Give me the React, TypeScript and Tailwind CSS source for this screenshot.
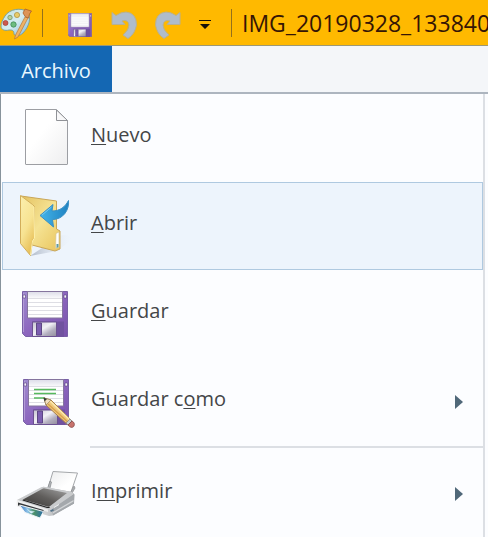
import type { ReactNode } from "react";

type MenuItem = {
  before: string;
  accessKey: string;
  after: string;
  icon: ReactNode;
  active?: boolean;
  submenu?: boolean;
};

function Palette() {
  return (
    <svg viewBox="0 0 34 34" className="h-[34px] w-[34px] shrink-0" aria-hidden="true">
      <defs>
        <linearGradient id="palette" x1="0" y1="0" x2="1" y2="1">
          <stop offset="0" stopColor="#c3e0dc" />
          <stop offset="0.5" stopColor="#d5edf1" />
          <stop offset="1" stopColor="#7fb4d8" />
        </linearGradient>
      </defs>
      <path
        d="M5 10C9 3 22 1 27 6c5 5 2 15-4 21-3 3-8 4-9 1 0-4-2-4-5-4-4 1-8 0-8-4 0-3 2-7 4-10Z"
        fill="url(#palette)"
        stroke="#7fa398"
      />
      <circle cx="10" cy="11.500" r="2.2" fill="#b9cf9c" stroke="#648f62" strokeWidth="0.7" />
      <circle cx="17" cy="9" r="2.6" fill="#e8cc68" stroke="#aa8c3e" strokeWidth="0.7" />
      <circle cx="5.500" cy="17" r="2.5" fill="#cd594d" stroke="#a63d35" strokeWidth="0.7" />
      <circle cx="13.500" cy="18.500" r="2.700" fill="#6dbd80" stroke="#37834f" strokeWidth="0.7" />
      <path d="M25 11 28 12 18 31l-3.500 2 1-4Z" fill="#eeb265" stroke="#b87838" strokeWidth="0.7" />
      <path d="m23 7 2-4 3 1 3.500 1-2 3-1 4-3-1Z" fill="#dd9458" stroke="#ad6028" strokeWidth="0.8" />
    </svg>
  );
}

function Floppy({ className, pencil }: { className: string; pencil?: boolean }) {
  return (
    <>
      <defs>
        <linearGradient id="case" x1="0" y1="0" x2="1" y2="1">
          <stop offset="0" stopColor="#a08cd0" />
          <stop offset="0.5" stopColor="#8c66be" />
          <stop offset="1" stopColor="#7852aa" />
        </linearGradient>
        <linearGradient id="shutter" x1="0" y1="0" x2="1" y2="1">
          <stop offset="0" stopColor="#c4c2cf" />
          <stop offset="0.45" stopColor="#f2f1f6" />
          <stop offset="0.7" stopColor="#b3afbf" />
          <stop offset="1" stopColor="#918c9c" />
        </linearGradient>
        <linearGradient id="label" x1="0" y1="0" x2="0" y2="1">
          <stop offset="0" stopColor="#dcdce8" />
          <stop offset="0.3" stopColor="#fff" />
        </linearGradient>
      </defs>
      <g className={className}>
        <path d="M0.500 0.500h45v45H3.500l-3-3Z" fill="url(#case)" stroke="#7860a6" />
        <path d="M1.500 2v39" stroke="#b39bd6" />
        <path d="M1 4h2.500v3H1ZM42 4h2.500v3H42Z" fill="#f4effa" stroke="#57407f" strokeWidth="0.600" />
        <path d="M5.500 0.500h35V27h-35Z" fill="url(#label)" stroke="#85759e" />
        <path d="M6 7.500h34M6 11.500h34M6 15.500h34M6 19.500h34M6 23.500h34" stroke="#dedee4" />
        <path d="M10 30.500h32V46H10Z" fill="#70529f" />
        <path d="M10.500 31h24v14.500h-24Z" fill="url(#shutter)" stroke="#6b5190" />
        <path d="M14.500 32h5v12h-5Z" fill="#7c5db0" stroke="#5d4684" />
      </g>
      {pencil && (
        <g>
          <path d="M20 19.500h22M20 23.500h22M20 28h11" stroke="#57b95d" strokeWidth="1.500" />
          <path d="m30 28 2 7 22 20 4-4-21-21Z" fill="#efc87a" stroke="#a98048" />
          <path d="m34 34 22 20" stroke="#d7a04e" strokeWidth="1.500" />
          <path d="m36 31 21 20" stroke="#fbe9b0" strokeWidth="1.500" />
          <path d="m30 28 2 7 5-5Z" fill="#f3dfbd" stroke="#8c7756" strokeWidth="0.600" />
          <path d="m29.500 27.500 1 4 2.500-2.500Z" fill="#343b38" />
          <path d="m52 53 4-4 2 2-4 4Z" fill="#c5cbd2" stroke="#777" strokeWidth="0.600" />
          <path d="m54 55 4-4c2 1 3 3 2 5s-4 2-6-1Z" fill="#c7736d" stroke="#7b3d3d" strokeWidth="0.700" />
        </g>
      )}
    </>
  );
}

function ItemIcon({ children }: { children: ReactNode }) {
  return (
    <svg viewBox="0 0 64 64" className="h-16 w-16 shrink-0" aria-hidden="true">
      {children}
    </svg>
  );
}

const newIcon = (
  <ItemIcon>
    <defs>
      <linearGradient id="sheet" x1="0" y1="0" x2="1" y2="1">
        <stop offset="0.4" stopColor="#fff" />
        <stop offset="1" stopColor="#eeeeef" />
      </linearGradient>
    </defs>
    <path d="M12 3.500h30.500l11 11V58q0 .5-.5.5H12q-.5 0-.5-.5V4q0-.5.5-.5Z" fill="url(#sheet)" stroke="#9c9ea3" />
    <path d="M43 5v10h9Z" fill="#dcdddf" />
    <path d="M42.500 4v10.500h11Z" fill="#f8f8f9" stroke="#909297" strokeLinejoin="round" />
  </ItemIcon>
);

const openIcon = (
  <ItemIcon>
    <defs>
      <linearGradient id="inside" x1="0" y1="0" x2="1" y2="1">
        <stop offset="0" stopColor="#e4c261" />
        <stop offset="0.5" stopColor="#f5e394" />
        <stop offset="1" stopColor="#e9c45c" />
      </linearGradient>
      <linearGradient id="cover" x1="0" y1="0" x2="0.500" y2="1">
        <stop offset="0" stopColor="#fbefae" />
        <stop offset="0.6" stopColor="#f7e392" />
        <stop offset="1" stopColor="#e9c25c" />
      </linearGradient>
      <linearGradient id="arrow" x1="0" y1="0" x2="1" y2="0">
        <stop offset="0" stopColor="#43b4e8" />
        <stop offset="1" stopColor="#1f82c2" />
      </linearGradient>
      <linearGradient id="shade" x1="0" y1="0" x2="1" y2="0">
        <stop offset="0" stopColor="#8d99ac" />
        <stop offset="1" stopColor="#edf3fb" stopOpacity="0" />
      </linearGradient>
    </defs>
    <path d="M44 42q13-3 15 3L43 57 16 62l12-8Z" fill="url(#shade)" opacity="0.650" />
    <path d="m7 2 35.500 5v28l3.500 2v18l-5 2-23-6Z" fill="url(#inside)" stroke="#c9a658" strokeLinejoin="round" />
    <path d="M42 39.500 45 38v15l-3.500 1.500Z" fill="#fff" stroke="#d7c58e" strokeWidth="0.700" />
    <path d="M42.500 50h2v3l-2 1Z" fill="#5e9aa0" />
    <path d="m6.500 1.500 12 9 2 2v31l-2 3-2 15-10-12Z" fill="url(#cover)" stroke="#d2ae5a" strokeLinejoin="round" />
    <path d="m20 13 .5 31-2 3-2 14" fill="none" stroke="#fff1ab" />
    <path
      d="m26 21.500 13-11-1 6.500c8 0 13-4 16.500-10.500 1 9-5 19-16 19l1 7.500Z"
      fill="url(#arrow)"
      stroke="#3a90c4"
      strokeLinejoin="round"
    />
    <path d="m28 21 9.500-8" fill="none" stroke="#77cbef" />
  </ItemIcon>
);

const printIcon = (
  <ItemIcon>
    <defs>
      <linearGradient id="glass" x1="0" y1="1" x2="1" y2="0">
        <stop offset="0" stopColor="#3a3937" />
        <stop offset="0.500" stopColor="#605e5c" />
        <stop offset="1" stopColor="#a3a3a3" />
      </linearGradient>
      <linearGradient id="body" x1="0" y1="0" x2="1" y2="0">
        <stop offset="0" stopColor="#f1f1f1" />
        <stop offset="0.500" stopColor="#cfd1d3" />
        <stop offset="1" stopColor="#96999d" />
      </linearGradient>
      <linearGradient id="paper" x1="0" y1="0" x2="1" y2="1">
        <stop offset="0" stopColor="#ebeced" />
        <stop offset="0.600" stopColor="#fff" />
      </linearGradient>
      <linearGradient id="photo" x1="0" y1="0" x2="1" y2="0">
        <stop offset="0" stopColor="#3f78bd" />
        <stop offset="0.350" stopColor="#8fc4ea" />
        <stop offset="0.600" stopColor="#4d9168" />
        <stop offset="1" stopColor="#2c6fa8" />
      </linearGradient>
    </defs>
    <path d="m33.500 28 5.500-18.500 24.500 1.500-7.500 22Z" fill="url(#paper)" stroke="#a4a7aa" />
    <path d="m33 28 3-9 1.500 1-2 8Zm23 4 4-8 1 2-4 7Z" fill="#b2b5b8" stroke="#85888b" strokeWidth="0.700" />
    <path d="m3 38 24-12.500q2-1 4-.5l27 5 2.500 2.500-.5 9L39 53.500l-4 .5L3 44.500q-1-3 0-6.500Z" fill="url(#body)" />
    <path d="m38 46 22-13.500v9L39 53.500Z" fill="#a4a8ac" />
    <path d="m39 50 20.500-12v1.500L39 51.500Z" fill="#d2d5d7" />
    <path d="m3 38 24-12.500q2-1 4-.5l27 5 2 2L38 47l-4 .5Z" fill="#c9cbcd" />
    <path d="m3 38 31 9.500v2.500L3 40.500Z" fill="#eeefef" />
    <path d="m9 37.500 20-11q1-.5 2 0L53 31 35.500 44.500q-1 .5-2 0Z" fill="url(#glass)" />
    <path d="m9 37.500 24.500 7.500h2l.5.5-1 .5h-2L8.500 38.500Z" fill="#242424" />
    <path d="m4 40.500 25.500 7.500v2.500L4 43.500Z" fill="#35383b" />
    <path d="m5.500 43 24 6.500L26 56 11 50.500Z" fill="url(#photo)" stroke="#f2f6f8" />
    <path d="m12 46 4 3 5 .5-4 2Z" fill="#d9effa" />
    <path d="m36 48.500 3-1.500 1 1.500-3 1.500Z" fill="#53738a" />
    <path d="m40 45.500 5-3" stroke="#eff1f2" />
  </ItemIcon>
);

const items: MenuItem[] = [
  { before: "", accessKey: "N", after: "uevo", icon: newIcon },
  { before: "", accessKey: "A", after: "brir", icon: openIcon, active: true },
  {
    before: "",
    accessKey: "G",
    after: "uardar",
    icon: (
      <ItemIcon>
        <Floppy className="translate-x-[8px] translate-y-[9px]" />
      </ItemIcon>
    ),
  },
  {
    before: "Guardar c",
    accessKey: "o",
    after: "mo",
    submenu: true,
    icon: (
      <ItemIcon>
        <Floppy className="translate-x-[9px] translate-y-[9px]" pencil />
      </ItemIcon>
    ),
  },
];

const printItem: MenuItem = { before: "I", accessKey: "m", after: "primir", icon: printIcon, submenu: true };

function MenuRow({ item }: { item: MenuItem }) {
  return (
    <button
      type="button"
      role="menuitem"
      aria-haspopup={item.submenu ? "menu" : undefined}
      className={`flex h-[88px] w-full items-center border pr-[19px] pl-[11px] text-left ${
        item.active ? "border-[#afc9e0] bg-[#edf4fc]" : "border-transparent"
      }`}
    >
      {item.icon}
      <span className="flex-1 pb-1.5 pl-[13px] text-[20px] leading-7 text-[#444648]">
        {item.before}
        <u className="decoration-1 underline-offset-2">{item.accessKey}</u>
        {item.after}
      </span>
      {item.submenu && (
        <svg viewBox="0 0 8 14" className="h-3.5 w-2" aria-hidden="true">
          <path d="M0 0v14l8-7Z" fill="#506879" />
        </svg>
      )}
    </button>
  );
}

function TurnArrow({ flip }: { flip?: boolean }) {
  return (
    <svg viewBox="0 0 26 28" className={`h-7 w-[26px] ${flip ? "-scale-x-100" : ""}`} aria-hidden="true">
      <path
        d="M1 1.500 5 4.500Q10 1 15 1q10.500 1 10.500 13Q24 23 17 27.500L12 24q6-5 6-10-1-6-7-4l3 3.500H1Z"
        fill="#afbccb"
        stroke="#b9b190"
        strokeLinejoin="round"
      />
    </svg>
  );
}

function TitleBar() {
  return (
    <header className="flex h-[46px] items-center overflow-hidden border-b border-[#9c9875] bg-[#ffb900]">
      <Palette />
      <div className="ml-2 h-7 w-px shrink-0 bg-[#94701c]" />
      <div className="ml-[25px] flex shrink-0 items-center">
        <button type="button" aria-label="Guardar" className="mt-1">
          <svg viewBox="0 0 46 46" className="h-6 w-6" aria-hidden="true">
            <Floppy className="translate-x-0" />
          </svg>
        </button>
        <button type="button" aria-label="Deshacer" className="ml-[19px] pt-1">
          <TurnArrow />
        </button>
        <button type="button" aria-label="Rehacer" className="ml-[18px] pt-1">
          <TurnArrow flip />
        </button>
        <button type="button" aria-label="Personalizar barra de acceso rápido" className="ml-[18px] pt-1">
          <svg viewBox="0 0 12 10" className="h-2.5 w-3" aria-hidden="true">
            <path d="M0 0h12v1H0ZM1 4h10L6 9Z" fill="#17120a" />
          </svg>
        </button>
      </div>
      <div className="ml-5 h-7 w-px shrink-0 bg-[#94701c]" />
      <h1 className="ml-2.5 text-[23px] leading-8 whitespace-nowrap text-[#351505]">IMG_20190328_133840</h1>
    </header>
  );
}

export default function App() {
  return (
    <div className="flex h-screen flex-col overflow-hidden bg-[#fcfdff] font-['Open_Sans','Noto_Sans',sans-serif]">
      <TitleBar />
      <nav className="flex h-12 shrink-0 border-b-2 border-[#adb5bf] bg-[#f4f6f9]">
        <button type="button" className="w-28 bg-[#1467b3] pt-1 text-[20px] leading-7 text-[#e9f8ff]">
          Archivo
        </button>
      </nav>
      <div className="flex min-h-0 flex-1">
        <div role="menu" className="min-w-0 flex-1 border-r-2 border-l border-r-[#dcdfe4] border-l-[#87939c] pl-px">
          {items.map((item) => (
            <MenuRow key={item.accessKey} item={item} />
          ))}
          <hr className="mb-0.5 ml-[88px] border-t-2 border-[#dcdfe4]" />
          <MenuRow item={printItem} />
        </div>
        <div className="w-[3px]" />
      </div>
    </div>
  );
}
